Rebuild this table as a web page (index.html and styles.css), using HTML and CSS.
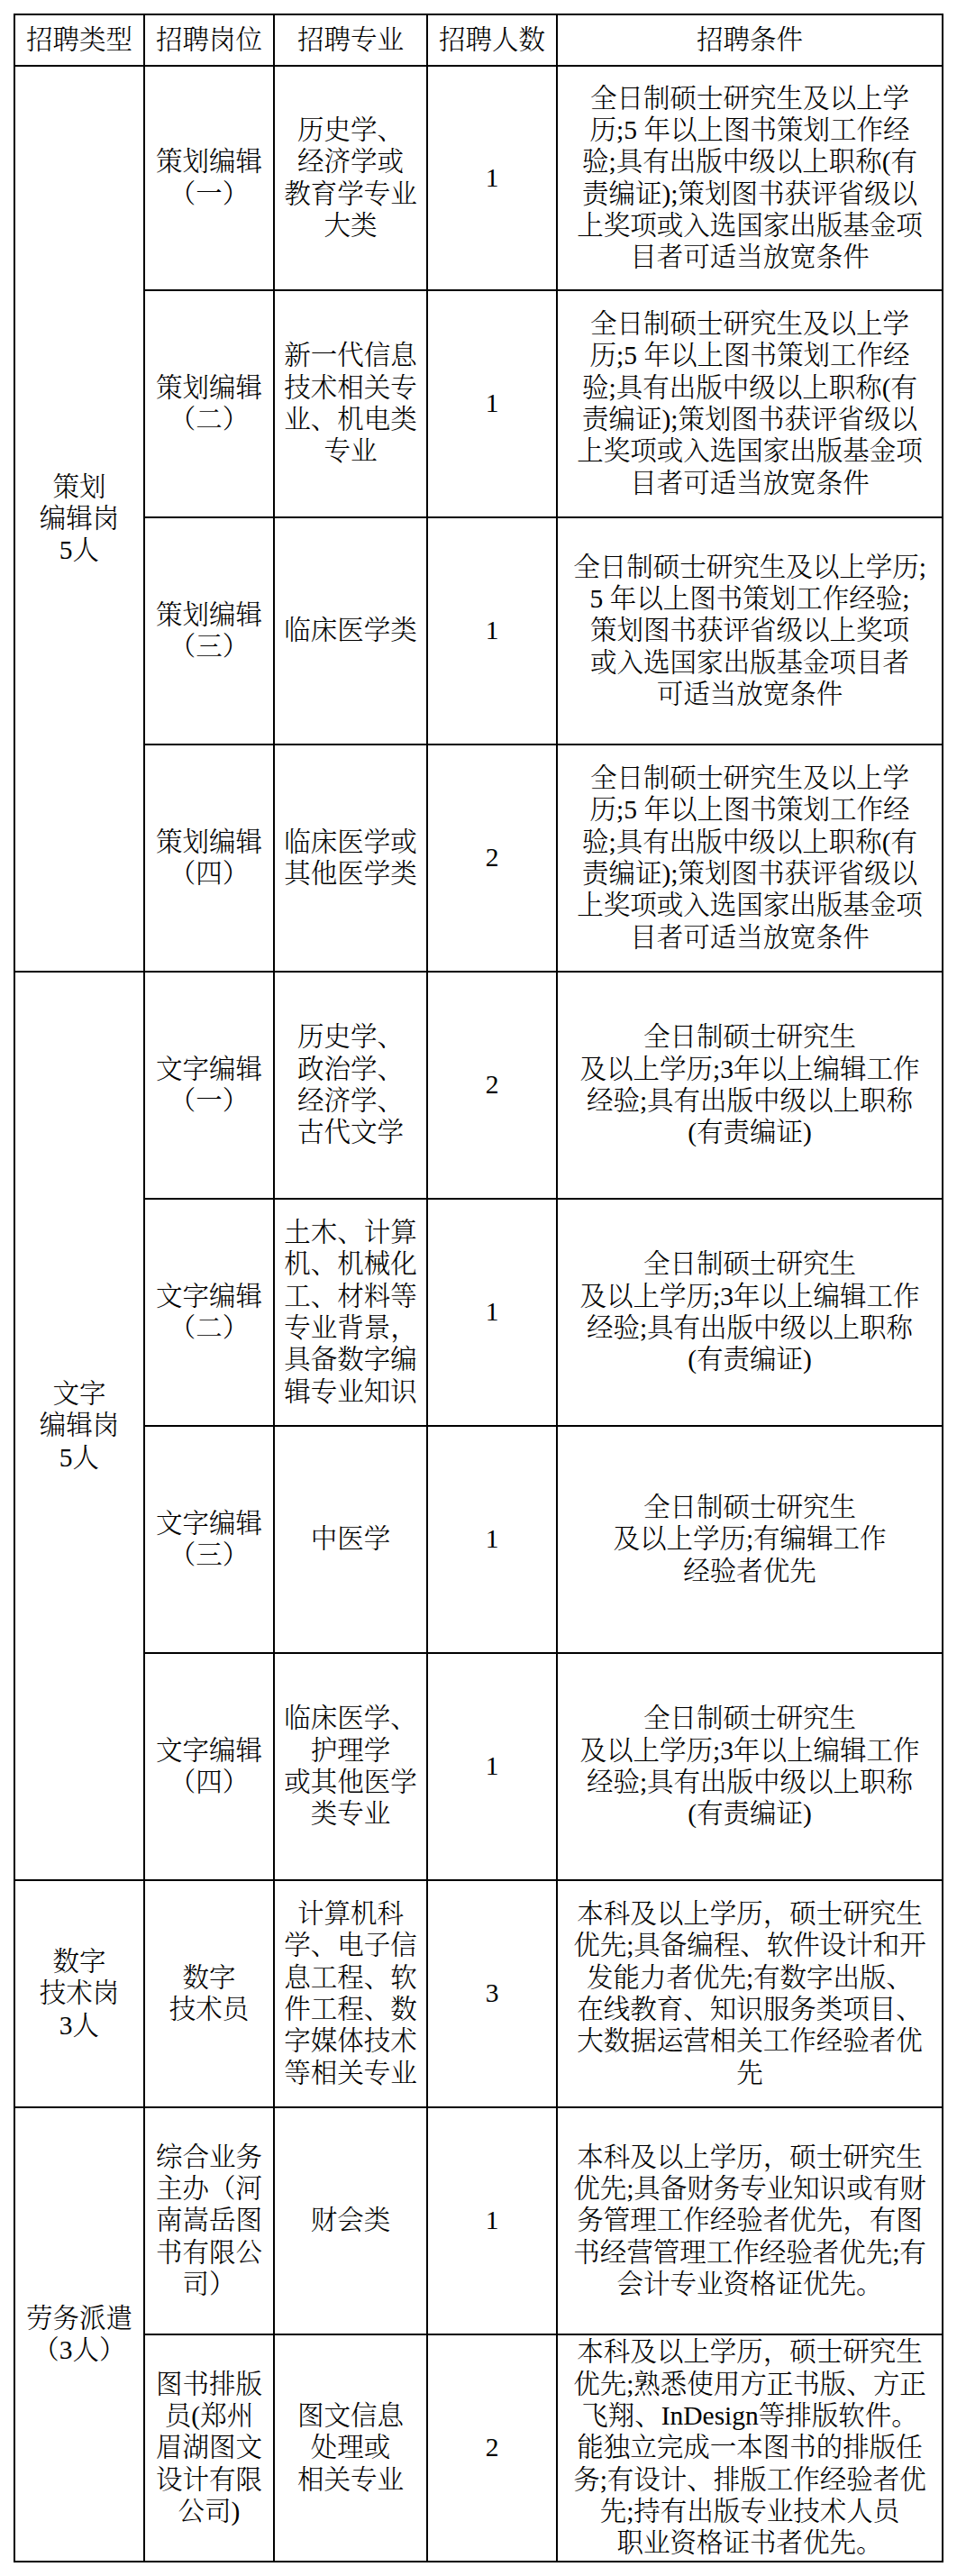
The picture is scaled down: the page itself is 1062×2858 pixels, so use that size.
FILE: index.html
```html
<!DOCTYPE html>
<html lang="zh-CN">
<head>
<meta charset="utf-8">
<title>招聘岗位表</title>
<link rel="stylesheet" href="styles.css">
</head>
<body>
<table class="jobs">
  <colgroup>
    <col class="c-type">
    <col class="c-post">
    <col class="c-major">
    <col class="c-num">
    <col class="c-cond">
  </colgroup>
  <thead>
    <tr class="head">
      <th>招聘类型</th>
      <th>招聘岗位</th>
      <th>招聘专业</th>
      <th>招聘人数</th>
      <th>招聘条件</th>
    </tr>
  </thead>
  <tbody>
    <tr class="row first">
      <td rowspan="4">策划<br>编辑岗<br>5人</td>
      <td>策划编辑<br>（一）</td>
      <td>历史学、<br>经济学或<br>教育学专业<br>大类</td>
      <td>1</td>
      <td>全日制硕士研究生及以上学<br>历;5 年以上图书策划工作经<br>验;具有出版中级以上职称(有<br>责编证);策划图书获评省级以<br>上奖项或入选国家出版基金项<br>目者可适当放宽条件</td>
    </tr>
    <tr class="row">
      <td>策划编辑<br>（二）</td>
      <td>新一代信息<br>技术相关专<br>业、机电类<br>专业</td>
      <td>1</td>
      <td>全日制硕士研究生及以上学<br>历;5 年以上图书策划工作经<br>验;具有出版中级以上职称(有<br>责编证);策划图书获评省级以<br>上奖项或入选国家出版基金项<br>目者可适当放宽条件</td>
    </tr>
    <tr class="row">
      <td>策划编辑<br>（三）</td>
      <td>临床医学类</td>
      <td>1</td>
      <td>全日制硕士研究生及以上学历;<br>5 年以上图书策划工作经验;<br>策划图书获评省级以上奖项<br>或入选国家出版基金项目者<br>可适当放宽条件</td>
    </tr>
    <tr class="row">
      <td>策划编辑<br>（四）</td>
      <td>临床医学或<br>其他医学类</td>
      <td>2</td>
      <td>全日制硕士研究生及以上学<br>历;5 年以上图书策划工作经<br>验;具有出版中级以上职称(有<br>责编证);策划图书获评省级以<br>上奖项或入选国家出版基金项<br>目者可适当放宽条件</td>
    </tr>
    <tr class="row">
      <td rowspan="4">文字<br>编辑岗<br>5人</td>
      <td>文字编辑<br>（一）</td>
      <td>历史学、<br>政治学、<br>经济学、<br>古代文学</td>
      <td>2</td>
      <td>全日制硕士研究生<br>及以上学历;3年以上编辑工作<br>经验;具有出版中级以上职称<br>(有责编证)</td>
    </tr>
    <tr class="row">
      <td>文字编辑<br>（二）</td>
      <td>土木、计算<br>机、机械化<br>工、材料等<br>专业背景，<br>具备数字编<br>辑专业知识</td>
      <td>1</td>
      <td>全日制硕士研究生<br>及以上学历;3年以上编辑工作<br>经验;具有出版中级以上职称<br>(有责编证)</td>
    </tr>
    <tr class="row">
      <td>文字编辑<br>（三）</td>
      <td>中医学</td>
      <td>1</td>
      <td>全日制硕士研究生<br>及以上学历;有编辑工作<br>经验者优先</td>
    </tr>
    <tr class="row">
      <td>文字编辑<br>（四）</td>
      <td>临床医学、<br>护理学<br>或其他医学<br>类专业</td>
      <td>1</td>
      <td>全日制硕士研究生<br>及以上学历;3年以上编辑工作<br>经验;具有出版中级以上职称<br>(有责编证)</td>
    </tr>
    <tr class="row">
      <td>数字<br>技术岗<br>3人</td>
      <td>数字<br>技术员</td>
      <td>计算机科<br>学、电子信<br>息工程、软<br>件工程、数<br>字媒体技术<br>等相关专业</td>
      <td>3</td>
      <td>本科及以上学历，硕士研究生<br>优先;具备编程、软件设计和开<br>发能力者优先;有数字出版、<br>在线教育、知识服务类项目、<br>大数据运营相关工作经验者优<br>先</td>
    </tr>
    <tr class="row">
      <td rowspan="2">劳务派遣<br>（3人）</td>
      <td>综合业务<br>主办（河<br>南嵩岳图<br>书有限公<br>司）</td>
      <td>财会类</td>
      <td>1</td>
      <td>本科及以上学历，硕士研究生<br>优先;具备财务专业知识或有财<br>务管理工作经验者优先，有图<br>书经营管理工作经验者优先;有<br>会计专业资格证优先。</td>
    </tr>
    <tr class="row">
      <td>图书排版<br>员(郑州<br>眉湖图文<br>设计有限<br>公司)</td>
      <td>图文信息<br>处理或<br>相关专业</td>
      <td>2</td>
      <td>本科及以上学历，硕士研究生<br>优先;熟悉使用方正书版、方正<br>飞翔、InDesign等排版软件。<br>能独立完成一本图书的排版任<br>务;有设计、排版工作经验者优<br>先;持有出版专业技术人员<br>职业资格证书者优先。</td>
    </tr>
  </tbody>
</table>
</body>
</html>
```
FILE: styles.css
```css
html, body {
  margin: 0;
  padding: 0;
  background: #ffffff;
}

body {
  padding: 15px 0 0 15px;
  font-family: "Liberation Serif", "Noto Serif CJK SC", "Noto Sans CJK SC", serif;
  color: #000000;
}

.jobs {
  border-collapse: collapse;
  table-layout: fixed;
  width: 1030px;
  font-size: 29.5px;
  line-height: 35.3px;
  font-weight: 300;
}

.c-type { width: 144px; }
.c-post { width: 144px; }
.c-major { width: 170px; }
.c-num { width: 144px; }
.c-cond { width: 428px; }

.jobs th,
.jobs td {
  border: 2px solid #000000;
  padding: 0 2px;
  text-align: center;
  vertical-align: middle;
  white-space: nowrap;
  font-weight: 300;
}

.head { height: 57px; }
.row { height: 252px; }
.row.first { height: 249px; }
```
